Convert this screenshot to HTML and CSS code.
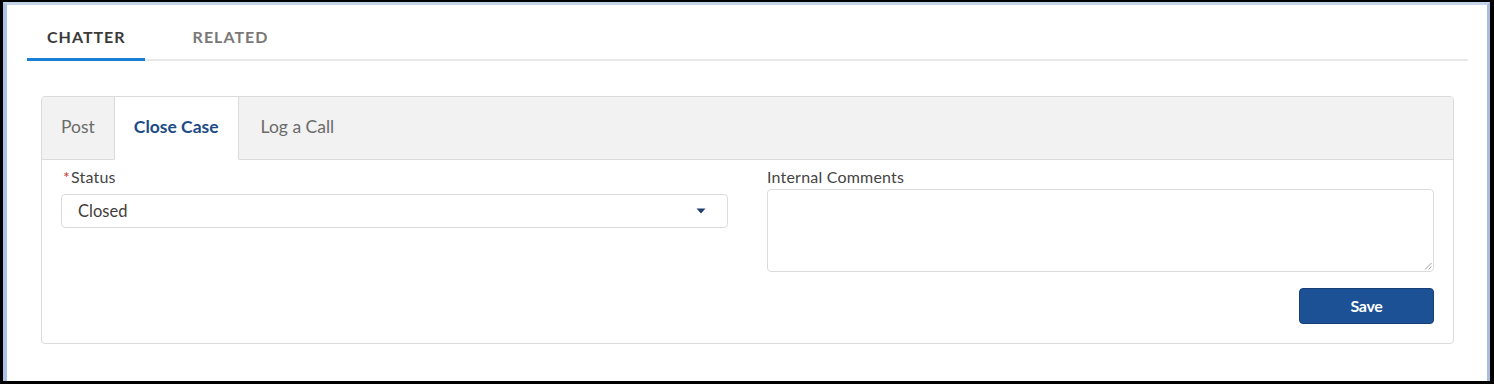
FILE: index.html
```html
<!DOCTYPE html>
<html>
<head>
<meta charset="utf-8">
<link rel="stylesheet" href="styles.css">
</head>
<body>
<div class="frame">
  <div class="page">
    <nav class="page-tabs">
      <div class="page-tab active">CHATTER</div>
      <div class="page-tab">RELATED</div>
    </nav>
    <section class="card">
      <div class="card-tabs">
        <div class="card-tab">Post</div>
        <div class="card-tab active">Close Case</div>
        <div class="card-tab">Log a Call</div>
      </div>
      <div class="card-body">
        <div class="col">
          <label class="label label-select"><span class="req">*</span>Status</label>
          <div class="select">
            <span>Closed</span>
            <svg class="caret" width="10" height="6" viewBox="0 0 10 6"><path d="M0.5 0.5 H9.5 L5 5.5 Z" fill="#1f3f6e"/></svg>
          </div>
        </div>
        <div class="col">
          <label class="label label-text">Internal Comments</label>
          <div class="textarea">
            <svg class="grip" width="8" height="8" viewBox="0 0 8 8"><path d="M7.5 1 L1 7.5 M7.5 4.5 L4.5 7.5" stroke="#9a9a9a" stroke-width="1"/></svg>
          </div>
          <div class="actions">
            <button class="btn">Save</button>
          </div>
        </div>
      </div>
    </section>
  </div>
</div>
</body>
</html>
```

FILE: styles.css
```css
* { box-sizing: border-box; }
html, body { margin: 0; padding: 0; }
body {
  background: #000;
  width: 1494px;
  height: 384px;
  overflow: hidden;
  font-family: Lato, "Open Sans", sans-serif;
}
.frame {
  margin: 2px 4px 0 3px;
  height: 379px;
  background: #fff;
  border-left: 4px solid #adc2e1;
  border-top: 3px solid #c3d3ea;
  border-right: 3px solid #a9bddb;
}
.page {
  padding: 10px 19px 0 20px;
}
.page-tabs {
  display: flex;
  gap: 28px;
  border-bottom: 2px solid #e8e8e8;
}
.page-tab {
  height: 46px;
  padding: 0 19px 0 20px;
  display: flex;
  align-items: center;
  font-size: 16px;
  font-weight: 700;
  letter-spacing: 1px;
  color: #7a7876;
  margin-bottom: -2px;
  border-bottom: 3px solid transparent;
}
.page-tab.active {
  color: #3b3a38;
  border-bottom-color: #1b7fd6;
}
.card {
  margin: 35px 14px 0;
  border: 1px solid #dddbda;
  border-radius: 4px;
  overflow: hidden;
}
.card-tabs {
  display: flex;
  height: 63px;
  background: #f2f2f2;
}
.card-tab {
  display: flex;
  align-items: center;
  padding: 0 19px 3px 19px;
  font-size: 17.5px;
  color: #6b6b6b;
  border-bottom: 1px solid #dddbda;
}
.card-tab:nth-child(3) { padding-left: 22px; flex: 1; }
.card-tab.active {
  background: #fff;
  color: #1d4b86;
  font-weight: 700;
  border-left: 1px solid #dddbda;
  border-right: 1px solid #dddbda;
  border-bottom-color: #fff;
  padding: 0 19px 3px 19px;
}
.card-body {
  display: grid;
  grid-template-columns: 667px 667px;
  column-gap: 39px;
  padding: 8px 19px 19px 19px;
}
.col { display: flex; flex-direction: column; }
.label {
  font-size: 16px;
  letter-spacing: 0.2px;
  color: #444;
  line-height: 18px;
}
.label-select { margin-bottom: 8px; }
.label-text { margin-bottom: 3px; }
.req { color: #c23934; margin: 0 1px 0 2px; }
.select {
  height: 34px;
  border: 1px solid #dddbda;
  border-radius: 4px;
  display: flex;
  align-items: center;
  justify-content: space-between;
  padding: 0 21px 0 16px;
  font-size: 16.5px;
  color: #3e3e3c;
}
.caret { display: block; }
.textarea {
  height: 83px;
  border: 1px solid #dddbda;
  border-radius: 4px;
  display: flex;
  align-items: flex-end;
  justify-content: flex-end;
  padding: 0 1px 1px 0;
}
.grip { display: block; }
.actions {
  display: flex;
  justify-content: flex-end;
  margin-top: 16px;
}
.btn {
  width: 135px;
  height: 36px;
  padding: 0 0 2px;
  background: #1c5196;
  border: 1px solid #163f78;
  border-radius: 4px;
  color: #fff;
  font-family: Lato, sans-serif;
  font-weight: 700;
  font-size: 16px;
  letter-spacing: -0.3px;
}
```
